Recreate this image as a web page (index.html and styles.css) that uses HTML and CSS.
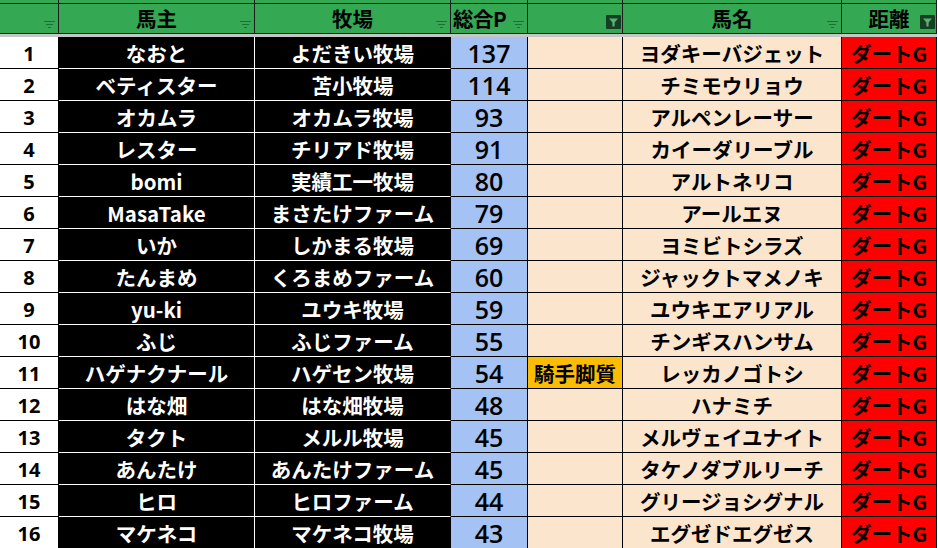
FILE: index.html
```html
<!DOCTYPE html>
<html lang="ja">
<head>
<meta charset="utf-8">
<link rel="stylesheet" href="styles.css">
</head>
<body>
<div class="sheet">
  <div class="ghost"></div><div class="ghost"></div><div class="ghost"></div><div class="ghost"></div><div class="ghost"></div><div class="ghost"></div><div class="ghost"></div>

  <div class="hd"><svg class="fi" viewBox="0 0 11 7"><path d="M0 0.5h11M2 3.5h7M4 6.5h3" stroke="#1f6e36" stroke-width="1"/></svg></div>
  <div class="hd">馬主<svg class="fi" viewBox="0 0 11 7"><path d="M0 0.5h11M2 3.5h7M4 6.5h3" stroke="#1f6e36" stroke-width="1"/></svg></div>
  <div class="hd">牧場<svg class="fi" viewBox="0 0 11 7"><path d="M0 0.5h11M2 3.5h7M4 6.5h3" stroke="#1f6e36" stroke-width="1"/></svg></div>
  <div class="hd hd-p">総合P<svg class="fi" viewBox="0 0 11 7"><path d="M0 0.5h11M2 3.5h7M4 6.5h3" stroke="#1f6e36" stroke-width="1"/></svg></div>
  <div class="hd"><svg class="fa" viewBox="0 0 15 14"><rect width="15" height="14" rx="1" fill="#143f22"/><path d="M3 3.5h9L8.6 7.5V11.5H6.4V7.5Z" fill="#5fae76"/></svg></div>
  <div class="hd">馬名<svg class="fi" viewBox="0 0 11 7"><path d="M0 0.5h11M2 3.5h7M4 6.5h3" stroke="#1f6e36" stroke-width="1"/></svg></div>
  <div class="hd">距離<svg class="fa" viewBox="0 0 15 14"><rect width="15" height="14" rx="1" fill="#143f22"/><path d="M3 3.5h9L8.6 7.5V11.5H6.4V7.5Z" fill="#5fae76"/></svg></div>

  <div class="freeze"></div>

  <div class="c rk">1</div><div class="c bk">なおと</div><div class="c bk bk2">よだきい牧場</div><div class="c pt">137</div><div class="c pe"></div><div class="c pe">ヨダキーバジェット</div><div class="c rd">ダートG</div>
  <div class="c rk">2</div><div class="c bk">ベティスター</div><div class="c bk bk2">苫小牧場</div><div class="c pt">114</div><div class="c pe"></div><div class="c pe">チミモウリョウ</div><div class="c rd">ダートG</div>
  <div class="c rk">3</div><div class="c bk">オカムラ</div><div class="c bk bk2">オカムラ牧場</div><div class="c pt">93</div><div class="c pe"></div><div class="c pe">アルペンレーサー</div><div class="c rd">ダートG</div>
  <div class="c rk">4</div><div class="c bk">レスター</div><div class="c bk bk2">チリアド牧場</div><div class="c pt">91</div><div class="c pe"></div><div class="c pe">カイーダリーブル</div><div class="c rd">ダートG</div>
  <div class="c rk">5</div><div class="c bk">bomi</div><div class="c bk bk2">実績工一牧場</div><div class="c pt">80</div><div class="c pe"></div><div class="c pe">アルトネリコ</div><div class="c rd">ダートG</div>
  <div class="c rk">6</div><div class="c bk">MasaTake</div><div class="c bk bk2">まさたけファーム</div><div class="c pt">79</div><div class="c pe"></div><div class="c pe">アールエヌ</div><div class="c rd">ダートG</div>
  <div class="c rk">7</div><div class="c bk">いか</div><div class="c bk bk2">しかまる牧場</div><div class="c pt">69</div><div class="c pe"></div><div class="c pe">ヨミビトシラズ</div><div class="c rd">ダートG</div>
  <div class="c rk">8</div><div class="c bk">たんまめ</div><div class="c bk bk2">くろまめファーム</div><div class="c pt">60</div><div class="c pe"></div><div class="c pe">ジャックトマメノキ</div><div class="c rd">ダートG</div>
  <div class="c rk">9</div><div class="c bk">yu-ki</div><div class="c bk bk2">ユウキ牧場</div><div class="c pt">59</div><div class="c pe"></div><div class="c pe">ユウキエアリアル</div><div class="c rd">ダートG</div>
  <div class="c rk">10</div><div class="c bk">ふじ</div><div class="c bk bk2">ふじファーム</div><div class="c pt">55</div><div class="c pe"></div><div class="c pe">チンギスハンサム</div><div class="c rd">ダートG</div>
  <div class="c rk">11</div><div class="c bk">ハゲナクナール</div><div class="c bk bk2">ハゲセン牧場</div><div class="c pt">54</div><div class="c or">騎手脚質</div><div class="c pe">レッカノゴトシ</div><div class="c rd">ダートG</div>
  <div class="c rk">12</div><div class="c bk">はな畑</div><div class="c bk bk2">はな畑牧場</div><div class="c pt">48</div><div class="c pe"></div><div class="c pe">ハナミチ</div><div class="c rd">ダートG</div>
  <div class="c rk">13</div><div class="c bk">タクト</div><div class="c bk bk2">メルル牧場</div><div class="c pt">45</div><div class="c pe"></div><div class="c pe">メルヴェイユナイト</div><div class="c rd">ダートG</div>
  <div class="c rk">14</div><div class="c bk">あんたけ</div><div class="c bk bk2">あんたけファーム</div><div class="c pt">45</div><div class="c pe"></div><div class="c pe">タケノダブルリーチ</div><div class="c rd">ダートG</div>
  <div class="c rk">15</div><div class="c bk">ヒロ</div><div class="c bk bk2">ヒロファーム</div><div class="c pt">44</div><div class="c pe"></div><div class="c pe">グリージョシグナル</div><div class="c rd">ダートG</div>
  <div class="c rk">16</div><div class="c bk">マケネコ</div><div class="c bk bk2">マケネコ牧場</div><div class="c pt">43</div><div class="c pe"></div><div class="c pe">エグゼドエグゼス</div><div class="c rd">ダートG</div>
</div>
</body>
</html>
```

FILE: styles.css
```css
html, body {
  margin: 0;
  padding: 0;
  background: #ffffff;
}
body {
  width: 938px;
  height: 548px;
  overflow: hidden;
  font-family: "Noto Sans CJK JP", "Noto Sans", sans-serif;
}
.sheet {
  display: grid;
  grid-template-columns: 59px 196px 196px 77px 95px 219px 95px;
  grid-template-rows: 4px 30px 3px repeat(16, 32px);
  width: 937px;
}
.sheet > div {
  box-sizing: border-box;
}
.ghost {
  background: #34a853;
  border-right: 1px solid #1c1c1c;
  border-bottom: 1px solid #1c1c1c;
}
.hd {
  background: #34a853;
  border-right: 1px solid #1c1c1c;
  border-bottom: 1px solid #1c1c1c;
  position: relative;
  display: flex;
  align-items: center;
  justify-content: center;
  font-weight: 700;
  font-size: 20.5px;
  line-height: 29px;
  color: #000;
}
.hd-p {
  justify-content: flex-start;
  padding-left: 2px;
  letter-spacing: -0.5px;
}
.fi {
  position: absolute;
  right: 3px;
  bottom: 5px;
  width: 11px;
  height: 7px;
}
.fa {
  position: absolute;
  right: 1px;
  top: 11px;
  width: 15px;
  height: 14px;
}
.freeze {
  grid-column: 1 / -1;
  background: #c6c6c6;
}
.c {
  display: flex;
  align-items: center;
  justify-content: center;
  border-right: 1px solid #000;
  border-bottom: 1px solid #000;
  font-weight: 700;
  font-size: 20.5px;
  line-height: 31px;
  padding-top: 1px;
  color: #000;
  white-space: nowrap;
}
.rk {
  background: #fff;
  font-family: "Open Sans", "Noto Sans", sans-serif;
  font-size: 20px;
}
.bk {
  background: #000;
  color: #fff;
  border-right-color: #fff;
  border-bottom-color: #fff;
}
.bk2 {
  border-right-color: #000;
}
.pt {
  background: #a4c2f4;
  font-family: "Open Sans", "Noto Sans", sans-serif;
  font-weight: 600;
  font-size: 25px;
}
.pe {
  background: #fce5cd;
}
.or {
  background: #fbbc04;
}
.rd {
  background: #ff0000;
}
```
